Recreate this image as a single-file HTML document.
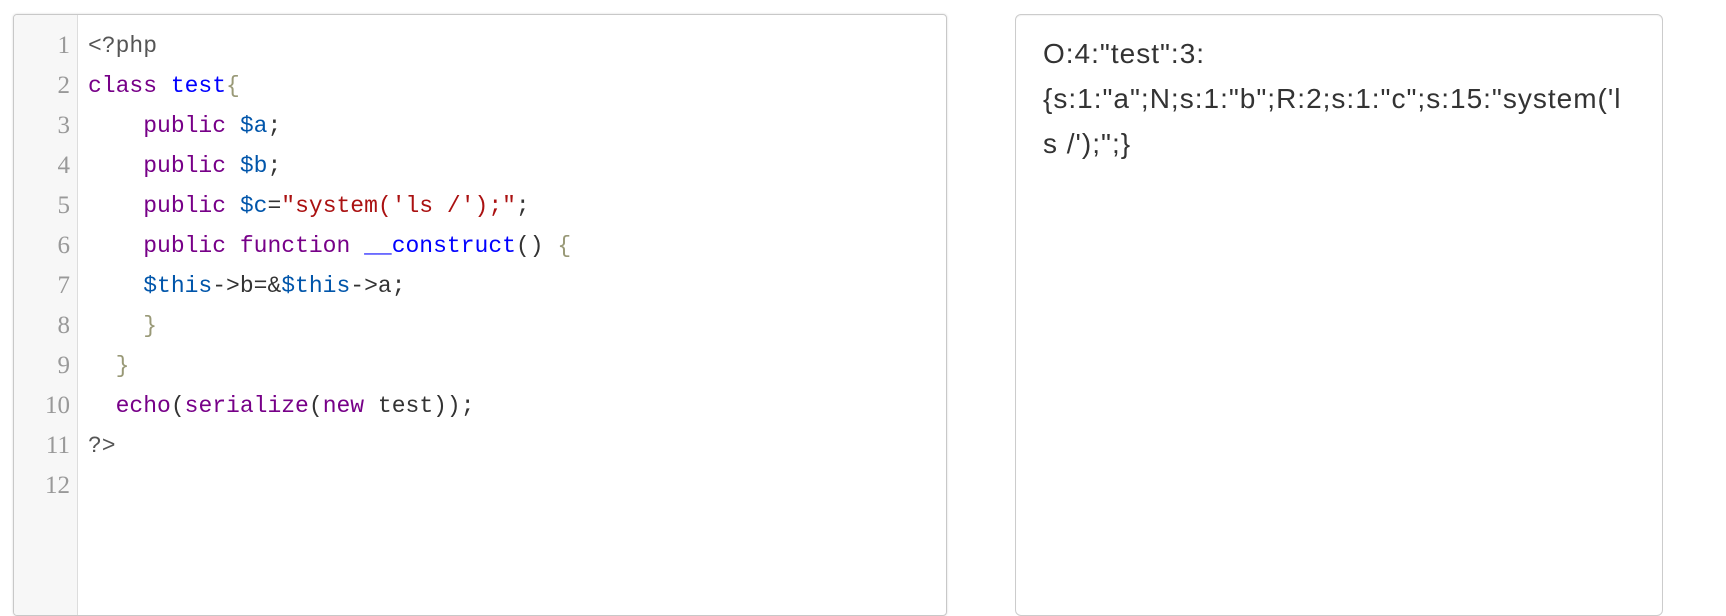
<!DOCTYPE html>
<html><head><meta charset="utf-8"><style>
html,body{margin:0;padding:0;background:#fff;width:1726px;height:569px;overflow:hidden}
.l{position:absolute;left:13px;top:14px;width:932px;height:600px;border:1px solid #c8c8c8;border-radius:4px;box-shadow:0 0 2px rgba(0,0,0,.15);overflow:hidden}
.g{position:absolute;left:0;top:0;width:63px;height:100%;background:#f7f7f7;border-right:1px solid #ddd}
.c{position:absolute;left:74px;top:11px;font:23px "Liberation Mono",monospace;color:#333}
.c div{height:40px;line-height:40px;white-space:pre}
.k{color:#708}.d{color:#00f}.v{color:#05a}.s{color:#a11}.m{color:#555}.b{color:#997}
.r{position:absolute;left:1015px;top:14px;width:646px;height:600px;border:1px solid #ccc;border-radius:6px;box-shadow:inset 0 1px 1px rgba(0,0,0,.05)}
.t{position:absolute;left:27px;top:16px;font:28px "Liberation Sans",Arial,sans-serif;letter-spacing:1px;color:#333;line-height:45px}
.nums div{height:40px;line-height:40px}
</style></head><body>
<div class="l">
<div class="g">
<div class="nums" style="padding-top:11px;text-align:right;padding-right:7px;color:#999;font:25px 'Liberation Serif',serif"><div>1</div><div>2</div><div>3</div><div>4</div><div>5</div><div>6</div><div>7</div><div>8</div><div>9</div><div>10</div><div>11</div><div>12</div></div>
</div>
<div class="c"><div class="m">&lt;?php</div><div><span class="k">class</span> <span class="d">test</span><span class="b">{</span></div><div>    <span class="k">public</span> <span class="v">$a</span>;</div><div>    <span class="k">public</span> <span class="v">$b</span>;</div><div>    <span class="k">public</span> <span class="v">$c</span>=<span class="s">"system('ls /');"</span>;</div><div>    <span class="k">public</span> <span class="k">function</span> <span class="d">__construct</span>() <span class="b">{</span></div><div>    <span class="v">$this</span>-&gt;b=&amp;<span class="v">$this</span>-&gt;a;</div><div>    <span class="b">}</span></div><div>  <span class="b">}</span></div><div>  <span class="k">echo</span>(<span class="k">serialize</span>(<span class="k">new</span> test));</div><div class="m">?&gt;</div><div></div></div>
</div>
<div class="r"><div class="t"><div>O:4:"test":3:</div><div>{s:1:"a";N;s:1:"b";R:2;s:1:"c";s:15:"system('l</div><div>s /');";}</div></div></div>
</body></html>
